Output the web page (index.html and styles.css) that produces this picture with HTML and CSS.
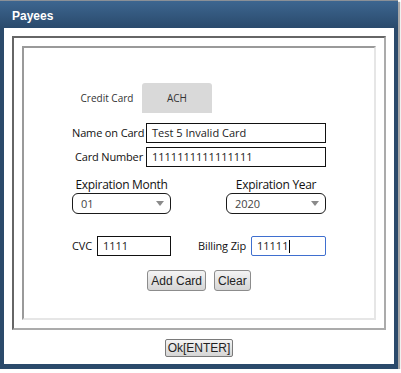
FILE: index.html
```html
<!DOCTYPE html>
<html lang="en">
<head>
    <meta charset="UTF-8">
    <title>Payees</title>
    <link rel="stylesheet" href="styles.css">
</head>
<body>
    <div class="window">
        <!-- Title bar -->
        <div class="title-bar">Payees</div>

        <div class="window-body">
            <div class="frame-outer">
                <div class="frame-inner">
                    <div class="card-form">
                        <!-- Tabs -->
                        <div class="tabs">
                            <div class="tab active">Credit Card</div>
                            <div class="tab">ACH</div>
                        </div>

                        <!-- Name / number -->
                        <div class="form-grid">
                            <label class="form-label">Name on Card</label>
                            <div class="field">Test 5 Invalid Card</div>
                            <label class="form-label">Card Number</label>
                            <div class="field">1111111111111111</div>
                        </div>

                        <!-- Expiration -->
                        <div class="expiry-row">
                            <div class="expiry-col month">
                                <div class="expiry-label">Expiration Month</div>
                                <div class="select"><span>01</span><span class="caret"></span></div>
                            </div>
                            <div class="expiry-col year">
                                <div class="expiry-label">Expiration Year</div>
                                <div class="select"><span>2020</span><span class="caret"></span></div>
                            </div>
                        </div>

                        <!-- CVC / zip -->
                        <div class="cvc-row">
                            <label class="form-label cvc-label">CVC</label>
                            <div class="field cvc-field">1111</div>
                            <div class="zip-group">
                                <label class="form-label zip-label">Billing Zip</label>
                                <div class="field zip-field focused">11111<span class="caret-line"></span></div>
                            </div>
                        </div>

                        <!-- Actions -->
                        <div class="actions">
                            <button class="btn">Add Card</button>
                            <button class="btn">Clear</button>
                        </div>
                    </div>
                </div>
            </div>

            <!-- Footer -->
            <div class="window-footer">
                <button class="btn ok-btn">Ok[ENTER]</button>
            </div>
        </div>
    </div>
</body>
</html>
```

FILE: styles.css
```css
/* Page */
body {
    margin: 0;
    background-color: #ffffff;
    font-family: "Open Sans", "Liberation Sans", sans-serif;
}

/* Dialog window */
.window {
    width: 398px;
    height: 369px;
    box-sizing: border-box;
    padding: 0 4px 5px 4px;
    background-color: #2b4a6b;
    box-shadow: 2px 2px 1px #a8a8a8;
}

.title-bar {
    height: 23px;
    margin: 0 -4px;
    padding: 4px 0 0 12px;
    border-top: 1px solid #8a9097;
    background: linear-gradient(to bottom, #3d6690, #2a4a6c);
    color: #ffffff;
    font-family: "Liberation Sans", Arial, sans-serif;
    font-weight: bold;
    font-size: 12px;
    line-height: 23px;
}

.window-body {
    height: 336px;
    box-sizing: border-box;
    padding: 8px 8px 0 8px;
    background-color: #ffffff;
}

/* Nested frames */
.frame-outer {
    height: 294px;
    box-sizing: border-box;
    padding: 8px;
    border: 2px solid;
    border-color: #666666 #ababab #ababab #666666;
}

.frame-inner {
    height: 274px;
    box-sizing: border-box;
    border: 2px solid;
    border-color: #9a9a9a #e6e6e6 #e6e6e6 #9a9a9a;
}

.card-form {
    width: 254px;
    margin: 0 auto;
    padding-top: 35px;
    color: #111111;
}

/* Tabs */
.tabs {
    display: flex;
}

.tab {
    width: 70px;
    height: 30px;
    line-height: 30px;
    text-align: center;
    font-size: 10px;
    color: #333333;
    background-color: #d9d9d9;
    border-radius: 3px 3px 0 0;
}

.tab.active {
    background-color: #ffffff;
}

/* Name and number */
.form-grid {
    display: grid;
    grid-template-columns: 71px 180px;
    column-gap: 3px;
    row-gap: 4px;
    margin-top: 10px;
}

.form-label {
    font-size: 11px;
    line-height: 20px;
    letter-spacing: -0.15px;
    text-align: right;
    white-space: nowrap;
}

.field {
    height: 20px;
    box-sizing: border-box;
    padding-left: 5px;
    border: 1px solid #111111;
    font-size: 11px;
    line-height: 18px;
    color: #222222;
}

/* Expiration */
.expiry-row {
    display: flex;
    justify-content: space-between;
    margin-top: 9px;
}

.expiry-col.month {
    width: 99px;
}

.expiry-col.year {
    width: 100px;
}

.expiry-label {
    text-align: center;
    font-size: 12px;
    line-height: 17px;
    letter-spacing: -0.3px;
    white-space: nowrap;
}

.select {
    display: flex;
    justify-content: space-between;
    align-items: center;
    height: 21px;
    box-sizing: border-box;
    padding: 0 6px 0 8px;
    border: 1px solid #1a1a1a;
    border-radius: 6px;
    font-size: 11px;
    color: #444444;
}

.caret {
    width: 0;
    height: 0;
    border-left: 4px solid transparent;
    border-right: 4px solid transparent;
    border-top: 5px solid #8a8a8a;
}

/* CVC and zip */
.cvc-row {
    display: flex;
    align-items: center;
    margin-top: 22px;
}

.cvc-label {
    margin-right: 5px;
}

.cvc-field {
    width: 74px;
}

.zip-group {
    display: flex;
    align-items: center;
    margin-left: auto;
}

.zip-label {
    margin-right: 5px;
}

.zip-field {
    width: 75px;
}

.field.focused {
    border-color: #3f6fcf;
    border-radius: 2px;
}

.caret-line {
    display: inline-block;
    width: 1px;
    height: 13px;
    margin-left: 1px;
    vertical-align: -3px;
    background-color: #000000;
}

/* Buttons */
.actions {
    display: flex;
    justify-content: center;
    gap: 8px;
    margin-top: 14px;
}

.btn {
    height: 21px;
    padding: 0 3px;
    border: 1px solid #8c8c8c;
    border-radius: 3px;
    background: linear-gradient(to bottom, #f4f4f4, #d5d5d5);
    color: #222222;
    font-family: "Liberation Sans", Arial, sans-serif;
    font-size: 12px;
    cursor: pointer;
}

.window-footer {
    display: flex;
    justify-content: center;
    padding-top: 9px;
}

.ok-btn {
    height: 18px;
    padding: 0 2px;
    border-color: #7a7a7a;
    border-radius: 2px;
    line-height: 14px;
}
```
